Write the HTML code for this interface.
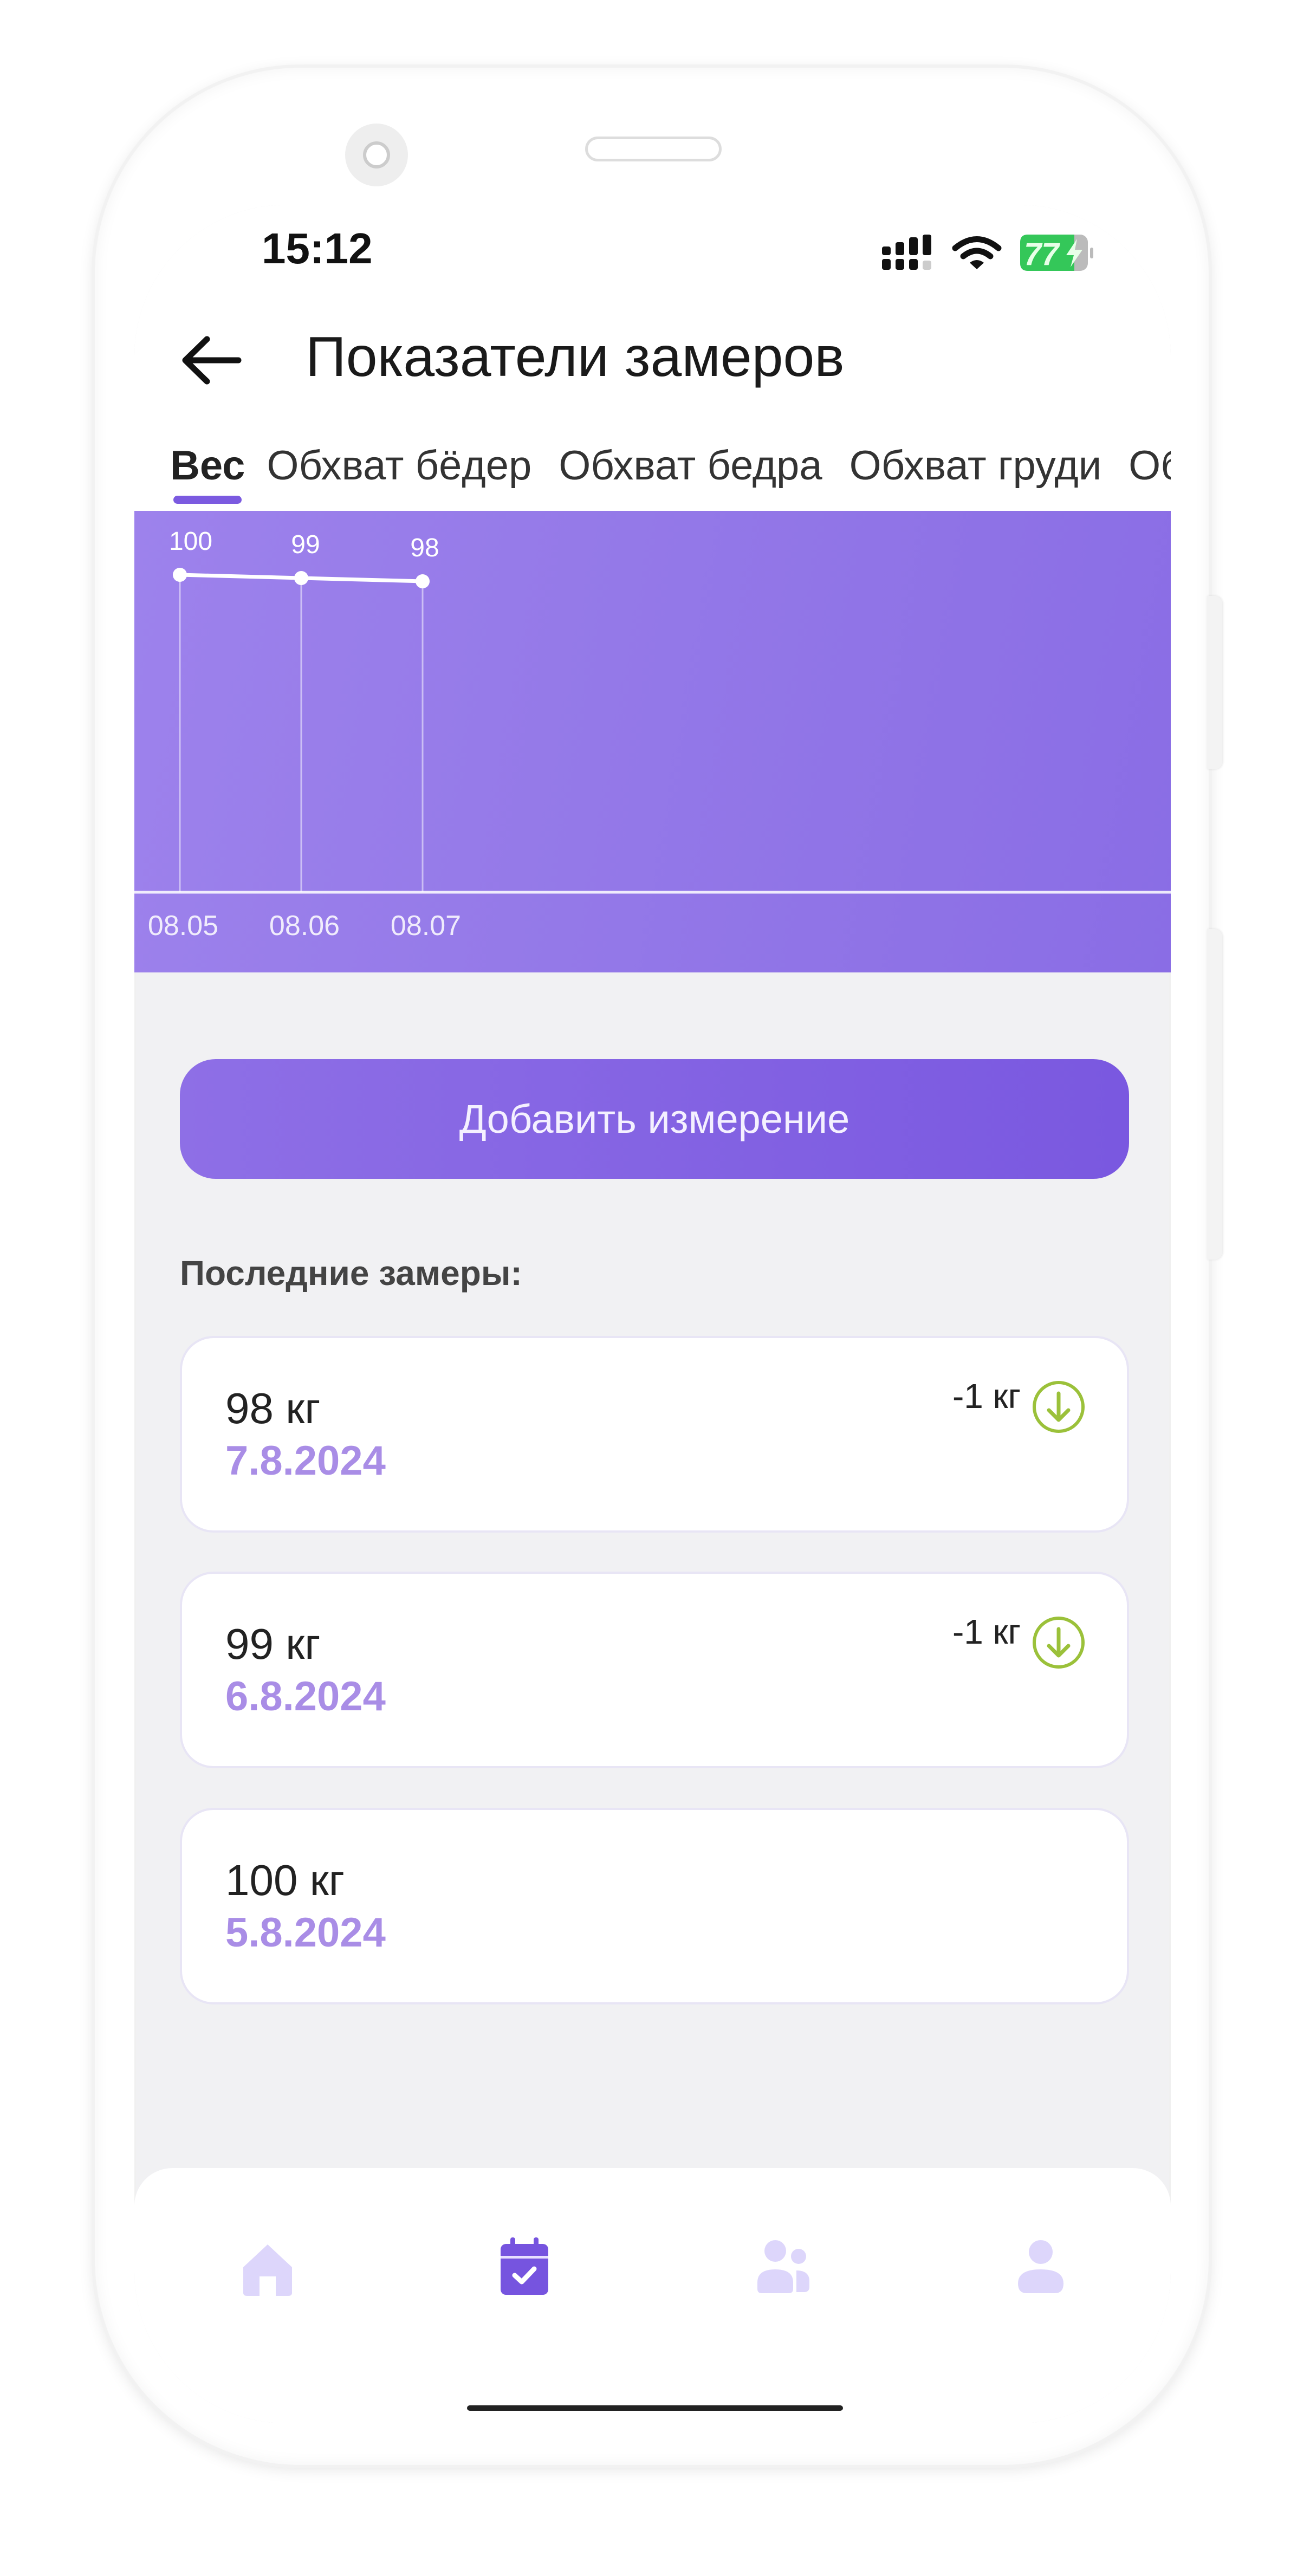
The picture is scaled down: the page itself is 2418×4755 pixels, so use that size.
<!DOCTYPE html>
<html><head><meta charset="utf-8"><style>
*{margin:0;padding:0;box-sizing:border-box}
body{width:2418px;height:4755px;background:#fff;position:relative;overflow:hidden;font-family:"Liberation Sans","DejaVu Sans",sans-serif}
.a{position:absolute}
.phone{left:175px;top:125px;width:2056px;height:4425px;border-radius:380px;background:#fff;box-shadow:0 0 0 6px #f2f2f2,0 6px 30px rgba(0,0,0,.12),inset 0 0 30px rgba(0,0,0,.05)}
.screen{left:248px;top:378px;width:1913px;height:4095px;border-radius:280px;background:#f1f1f3;overflow:hidden;box-shadow:inset 0 0 0 3px #f0f0f0}
.card{left:84px;width:1752px;height:363px;background:#fff;border:4px solid #e8e5f5;border-radius:62px}
.kg{left:80px;top:84px;font-size:80px;color:#222}
.dt{left:80px;top:183px;font-size:76px;color:#a98de6;font-weight:bold}
.dl{right:196px;top:70px;font-size:64px;color:#222}
.ci{right:76px;top:77px;width:100px;height:100px}
</style></head><body>
<div class="a phone"></div>
<div class="a" style="left:2228px;top:1100px;width:28px;height:320px;border-radius:0 14px 14px 0;background:#f3f3f3;box-shadow:1px 0 4px rgba(0,0,0,.1)"></div>
<div class="a" style="left:2228px;top:1715px;width:28px;height:610px;border-radius:0 14px 14px 0;background:#f3f3f3;box-shadow:1px 0 4px rgba(0,0,0,.1)"></div>
<div class="a" style="left:637px;top:228px;width:116px;height:116px;border-radius:50%;background:#eee"></div>
<div class="a" style="left:670px;top:261px;width:50px;height:50px;border-radius:50%;border:6px solid #ccc;background:#fff"></div>
<div class="a" style="left:1080px;top:252px;width:252px;height:46px;border-radius:23px;border:5px solid #ddd;background:#fff"></div>
<div class="a screen">
 <div class="a" style="left:0;top:0;width:1913px;height:565px;background:#fff"></div>
 <div class="a" style="left:235px;top:35px;font-size:80px;font-weight:bold;color:#111">15:12</div>
 <svg class="a" style="left:1380px;top:55px" width="400" height="70" viewBox="0 0 400 70">
  <g fill="#111"><rect x="0" y="45" width="16" height="20" rx="4"/><rect x="25" y="45" width="16" height="20" rx="4"/><rect x="50" y="45" width="16" height="20" rx="4"/><rect x="75" y="48" width="16" height="17" rx="4" fill="#ccc"/>
  <rect x="0" y="22" width="16" height="16" rx="4"/><rect x="25" y="14" width="16" height="24" rx="4"/><rect x="50" y="5" width="16" height="33" rx="4"/><rect x="75" y="0" width="16" height="38" rx="4"/></g>
  <path d="M135 25 Q175 -8 215 25" stroke="#111" stroke-width="11" fill="none" stroke-linecap="round"/>
  <path d="M150 40 Q175 20 200 40" stroke="#111" stroke-width="11" fill="none" stroke-linecap="round"/>
  <path d="M162 52 L175 64 L188 52 Q175 42 162 52Z" fill="#111"/>
  <rect x="255" y="0" width="125" height="67" rx="14" fill="#bbb"/>
  <path d="M269 0 H355 V67 H269 Q255 67 255 53 V14 Q255 0 269 0Z" fill="#34c759"/>
  <rect x="384" y="24" width="6" height="20" rx="3" fill="#bbb"/>
  <text x="262" y="56" font-size="58" font-weight="bold" font-style="italic" fill="#e8ffe8" font-family="Liberation Sans">77</text>
  <path d="M360 8 L340 38 H354 L348 60 L370 28 H356Z" fill="#e8ffe8"/>
 </svg>
 <svg class="a" style="left:84px;top:240px" width="115" height="95" viewBox="0 0 115 95"><path d="M108 47 H10 M50 8 L10 47 L50 86" stroke="#111" stroke-width="11" fill="none" stroke-linecap="round" stroke-linejoin="round"/></svg>
 <div class="a" style="left:316px;top:222px;font-size:104px;color:#1a1a1a">Показатели замеров</div>
 <div class="a" style="left:66px;top:438px;font-size:76px;white-space:nowrap;color:#333"><b style="color:#222">Вес</b><span style="margin-left:40px">Обхват бёдер</span><span style="margin-left:50px">Обхват бедра</span><span style="margin-left:50px">Обхват груди</span><span style="margin-left:50px">Обхват</span></div>
 <div class="a" style="left:72px;top:537px;width:126px;height:15px;border-radius:8px;background:#7b5ae0"></div>
 <div class="a" style="left:0;top:565px;width:1913px;height:852px;background:linear-gradient(100deg,#9d82ec 0%,#9479e8 45%,#8a6de5 100%)"></div>
 <svg class="a" style="left:0;top:565px" width="1913" height="852">
  <g stroke="#fff" stroke-opacity=".5" stroke-width="3"><line x1="84" y1="118" x2="84" y2="704"/><line x1="308" y1="124" x2="308" y2="704"/><line x1="532" y1="130" x2="532" y2="704"/></g>
  <line x1="0" y1="704" x2="1913" y2="704" stroke="#fff" stroke-opacity=".85" stroke-width="5"/>
  <polyline points="84,118 308,124 532,130" stroke="#fff" stroke-width="7" fill="none"/>
  <g fill="#fff"><circle cx="84" cy="118" r="13"/><circle cx="308" cy="124" r="13"/><circle cx="532" cy="130" r="13"/></g>
  <g fill="#fff" font-size="48" font-family="Liberation Sans" text-anchor="middle"><text x="104" y="72">100</text><text x="316" y="78">99</text><text x="536" y="84">98</text></g>
  <g fill="#fff" fill-opacity=".85" font-size="52" font-family="Liberation Sans" text-anchor="middle"><text x="90" y="783">08.05</text><text x="314" y="783">08.06</text><text x="538" y="783">08.07</text></g>
 </svg>
 <div class="a" style="left:84px;top:1577px;width:1752px;height:221px;border-radius:66px;background:linear-gradient(90deg,#8e6fe6,#7a58e0);color:#f4f0ff;font-size:74px;text-align:center;line-height:221px">Добавить измерение</div>
 <div class="a" style="left:84px;top:1935px;font-size:64px;font-weight:bold;color:#444">Последние замеры:</div>
 <div class="a card" style="top:2088px"><div class="a kg">98 кг</div><div class="a dt">7.8.2024</div><div class="a dl">-1 кг</div>
  <svg class="a ci" viewBox="0 0 100 100"><circle cx="50" cy="50" r="45" stroke="#9bc13a" stroke-width="6" fill="none"/><path d="M50 25 V73 M32 56 L50 74 L68 56" stroke="#9bc13a" stroke-width="7" fill="none" stroke-linecap="round" stroke-linejoin="round"/></svg></div>
 <div class="a card" style="top:2523px"><div class="a kg">99 кг</div><div class="a dt">6.8.2024</div><div class="a dl">-1 кг</div>
  <svg class="a ci" viewBox="0 0 100 100"><circle cx="50" cy="50" r="45" stroke="#9bc13a" stroke-width="6" fill="none"/><path d="M50 25 V73 M32 56 L50 74 L68 56" stroke="#9bc13a" stroke-width="7" fill="none" stroke-linecap="round" stroke-linejoin="round"/></svg></div>
 <div class="a card" style="top:2959px"><div class="a kg">100 кг</div><div class="a dt">5.8.2024</div></div>
 <div class="a" style="left:0;top:3624px;width:1913px;height:500px;background:#fff;border-radius:70px 70px 0 0"></div>
 <svg class="a" style="left:196px;top:3762px" width="100" height="100" viewBox="0 0 100 100"><path d="M50 3 L95 45 V92 Q95 98 88 98 H65 V62 H35 V98 H12 Q5 98 5 92 V45Z" fill="#ddd6fb"/></svg>
 <svg class="a" style="left:672px;top:3750px" width="96" height="110" viewBox="0 0 96 110"><rect x="4" y="14" width="88" height="94" rx="10" fill="#7654df"/><rect x="22" y="2" width="9" height="22" rx="4" fill="#7654df"/><rect x="65" y="2" width="9" height="22" rx="4" fill="#7654df"/><rect x="4" y="36" width="88" height="5" fill="#e8e0ff"/><path d="M30 72 L43 84 L66 60" stroke="#fff" stroke-width="9" fill="none" stroke-linecap="round" stroke-linejoin="round"/></svg>
 <svg class="a" style="left:1148px;top:3755px" width="100" height="105" viewBox="0 0 100 105"><g fill="#ddd6fb"><circle cx="35" cy="22" r="20"/><circle cx="78" cy="32" r="14"/><path d="M2 80 Q2 56 35 56 Q68 56 68 80 V92 Q68 100 60 100 H10 Q2 100 2 92Z"/><path d="M74 58 Q98 58 98 78 V88 Q98 98 88 98 H74Z"/></g></svg>
 <svg class="a" style="left:1625px;top:3755px" width="96" height="105" viewBox="0 0 96 105"><g fill="#ddd6fb"><circle cx="48" cy="24" r="22"/><path d="M6 82 Q6 56 48 56 Q90 56 90 82 Q90 100 74 100 H22 Q6 100 6 82Z"/></g></svg>
 <div class="a" style="left:614px;top:4062px;width:694px;height:10px;border-radius:5px;background:#222"></div>
</div>
</body></html>
